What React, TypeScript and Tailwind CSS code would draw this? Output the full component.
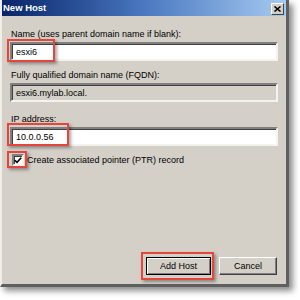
import React from 'react'

const sunken = 'border-2 border-t-[#808080] border-l-[#808080] border-r-[#f4f3ef] border-b-[#f4f3ef] shadow-[inset_1px_1px_0_#404040]'

const RedBox = ({ className }: { className: string }) => (
    <span className={`pointer-events-none absolute border-2 border-[#e5453b] shadow-[2px_2px_3px_rgba(0,0,0,0.35)] ${className}`} />
)

const App: React.FC = () => {
    return (
        <div className="w-[300px] h-[300px] bg-white text-black" style={{ fontFamily: '"Liberation Sans", Arial, sans-serif' }}>
            <div className="flex flex-col w-[289px] h-[287px] bg-[#d4d0c8] border-l-2 border-l-[#f0eee8] border-r-[3px] border-r-[#5f5f5f] border-b-[3px] border-b-[#5f5f5f] shadow-[4px_4px_6px_rgba(0,0,0,0.45)]">
                {/* title bar */}
                <div className="flex items-center justify-between h-[16px] pl-[1px] pr-[2px] bg-gradient-to-r from-[#0a246a] via-[#4a78c0] to-[#a6caf0]">
                    <span className="text-white font-bold text-[9.5px] leading-[12px]">New Host</span>
                    <button className="flex items-center justify-center w-[13px] h-[12px] bg-[#d4d0c8] border border-t-white border-l-white border-r-[#404040] border-b-[#404040] mt-[2px]">
                        <svg width="7" height="6" viewBox="0 0 7 6">
                            <path d="M0.5 0.5 L6.5 5.5 M6.5 0.5 L0.5 5.5" stroke="#000" strokeWidth="1.6" />
                        </svg>
                    </button>
                </div>

                <div className="flex flex-col flex-1 pl-[8px] pr-[8px] pb-[9px] text-[9px] leading-[12px]">
                    <label className="mt-[12px] pl-[1px]">Name (uses parent domain name if blank):</label>
                    <div className="relative mt-[2px]">
                        <div className={`h-[19px] bg-white ${sunken} flex items-center pl-[4px]`}>esxi6</div>
                        <RedBox className="-left-[3px] -top-[3px] w-[48px] h-[23px]" />
                    </div>

                    <label className="mt-[8px] pl-[1px]">Fully qualified domain name (FQDN):</label>
                    <div className={`mt-[2px] h-[19px] bg-[#d4d0c8] ${sunken} flex items-center pl-[4px]`}>esxi6.mylab.local.</div>

                    <label className="mt-[11px] pl-[1px]">IP address:</label>
                    <div className="relative mt-[2px]">
                        <div className={`h-[19px] bg-white ${sunken} flex items-center pl-[4px]`}>10.0.0.56</div>
                        <RedBox className="-left-[3px] -top-[4px] w-[62px] h-[23px]" />
                    </div>

                    <div className="flex items-center mt-[8px] pl-[2px] gap-[3px]">
                        <div className="relative">
                            <div className={`w-[12px] h-[12px] bg-white ${sunken} flex items-center justify-center`}>
                                <svg width="8" height="7" viewBox="0 0 8 7">
                                    <path d="M0.8 3.2 L3 5.4 L7.2 0.8" stroke="#000" strokeWidth="1.6" fill="none" />
                                </svg>
                            </div>
                            <RedBox className="-left-[5px] -top-[3px] w-[20px] h-[17px]" />
                        </div>
                        <span>Create associated pointer (PTR) record</span>
                    </div>

                    <div className="mt-auto flex justify-end gap-[8px] pr-[1px]">
                        <div className="relative">
                            <button className="w-[65px] h-[18px] bg-[#d4d0c8] border border-black shadow-[inset_1px_1px_0_#fff,inset_-1px_-1px_0_#808080] text-[9px] leading-[12px]">Add Host</button>
                            <RedBox className="-left-[5px] -top-[5px] w-[73px] h-[28px]" />
                        </div>
                        <button className="w-[58px] h-[18px] bg-[#d4d0c8] border border-t-white border-l-white border-r-[#404040] border-b-[#404040] shadow-[inset_-1px_-1px_0_#808080] text-[9px] leading-[12px]">Cancel</button>
                    </div>
                </div>
            </div>
        </div>
    )
}

export default App
